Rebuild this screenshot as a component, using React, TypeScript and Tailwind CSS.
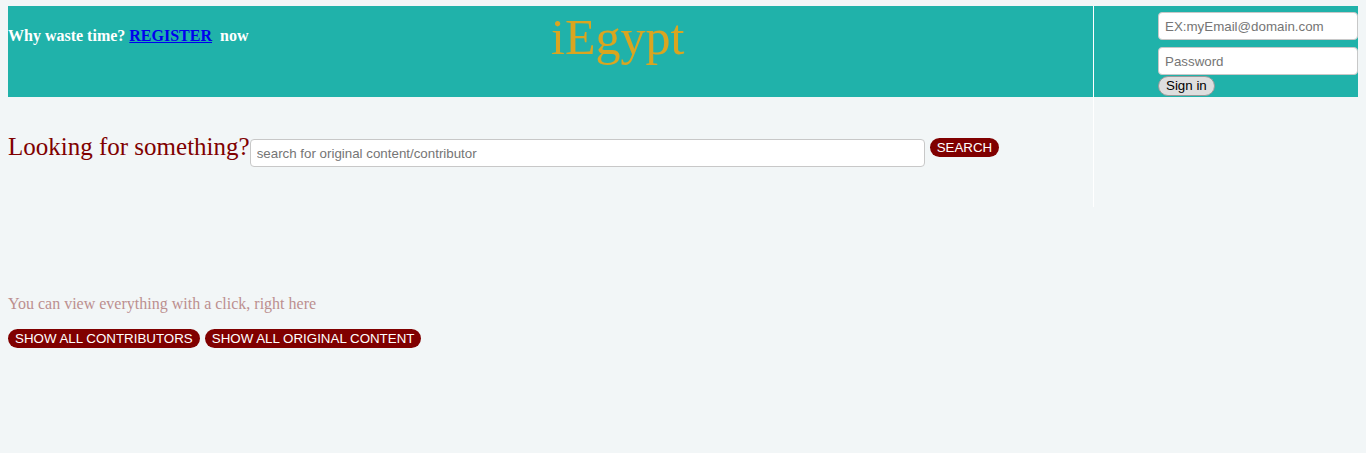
import React from "react";

const serif = { fontFamily: "'Liberation Serif', 'Times New Roman', serif" };
const sans = { fontFamily: "'Liberation Sans', Arial, sans-serif" };

export default function App() {
  return (
    <div className="min-h-[453px] bg-[#f2f6f7] pt-[6px] px-[8px]" style={serif}>
      {/* header row */}
      <div className="flex h-[91px] w-[1350px] bg-[#20b2aa]">
        <div className="flex w-[1086px] shrink-0 items-start border-r border-white">
          <div className="w-[543px] shrink-0 pt-[21px] text-[16px] font-bold leading-[18px] text-white">
            Why waste time?{" "}
            <a href="#" className="text-[#0000ee] underline">
              REGISTER
            </a>{" "}
            &nbsp;now
          </div>
          <div className="mt-[4px] text-[50px] leading-[55px] text-[#daa520]">iEgypt</div>
        </div>
        <div className="flex flex-col items-start pl-[64px] pt-[6px]" style={sans}>
          <input
            className="h-[28px] w-[200px] rounded-[4px] border border-[#c8c8c8] bg-white px-[6px] text-[13.33px] text-black placeholder:text-[#757575] outline-none"
            placeholder="EX:myEmail@domain.com"
          />
          <input
            type="password"
            className="mt-[7px] h-[28px] w-[200px] rounded-[4px] border border-[#c8c8c8] bg-white px-[6px] text-[13.33px] text-black placeholder:text-[#757575] outline-none"
            placeholder="Password"
          />
          <button className="mt-[1px] h-[20px] rounded-full border border-[#999] bg-[#dedede] px-[7px] text-[13.33px] leading-[16px] text-black">
            Sign in
          </button>
        </div>
      </div>

      {/* search row */}
      <div className="flex h-[110px]">
        <div className="flex w-[1086px] shrink-0 items-start border-r border-white pt-[35px]">
          <h2 className="text-[25px] leading-[29px] font-normal text-[#800000]">Looking for something?</h2>
          <input
            className="mt-[7px] h-[28px] w-[675px] rounded-[4px] border border-[#c8c8c8] bg-white px-[6px] text-[13.33px] placeholder:text-[#757575] outline-none"
            style={sans}
            placeholder="search for original content/contributor"
          />
          <button
            className="mt-[6px] ml-[5px] h-[19px] rounded-full bg-[#800000] px-[7px] text-[13.33px] leading-[19px] text-white"
            style={sans}
          >
            SEARCH
          </button>
        </div>
      </div>

      {/* view all */}
      <p className="mt-[88px] text-[16px] leading-[18px] text-[#bc8f8f]">
        You can view everything with a click, right here
      </p>
      <div className="mt-[16px] flex gap-[5px]" style={sans}>
        <button className="h-[19px] whitespace-nowrap rounded-full bg-[#800000] px-[7px] text-[13.33px] leading-[19px] text-white">
          SHOW ALL CONTRIBUTORS
        </button>
        <button className="h-[19px] whitespace-nowrap rounded-full bg-[#800000] px-[7px] text-[13.33px] leading-[19px] text-white">
          SHOW ALL ORIGINAL CONTENT
        </button>
      </div>
    </div>
  );
}
